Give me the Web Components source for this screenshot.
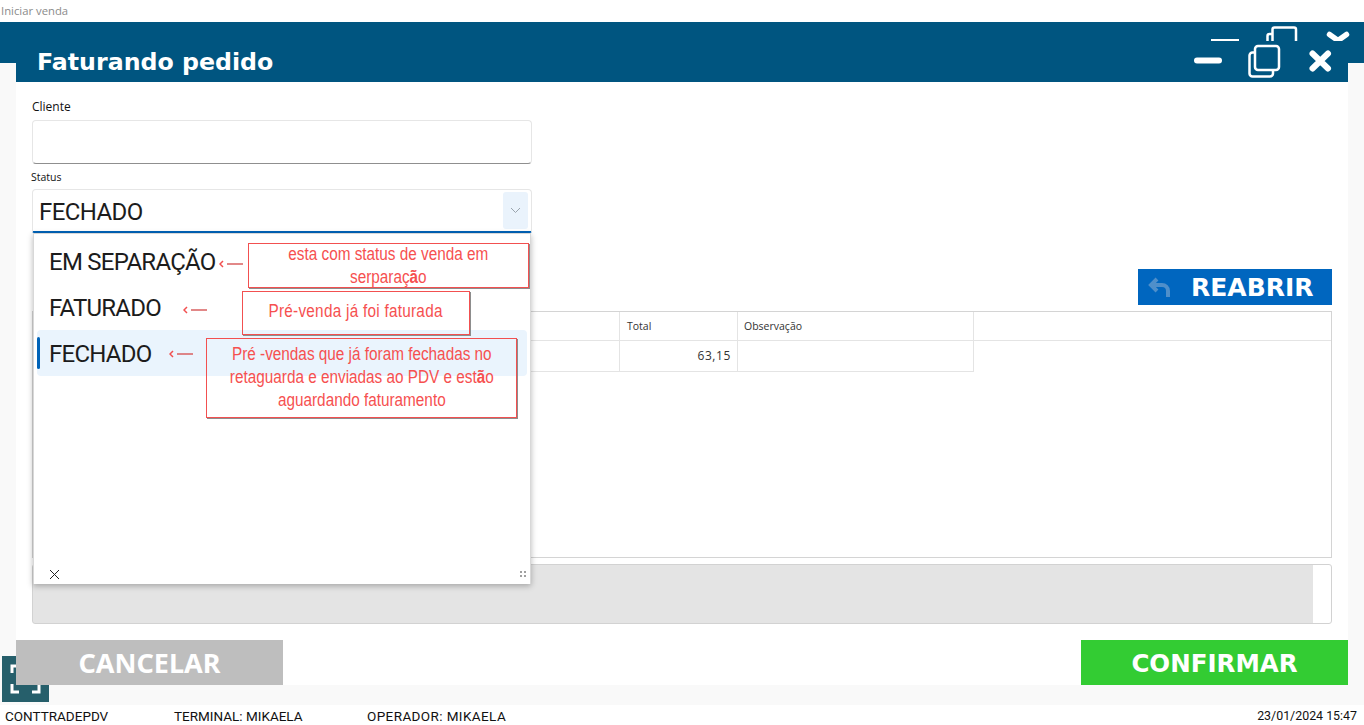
<!DOCTYPE html>
<html lang="pt-BR">
<head>
<meta charset="UTF-8">
<title>Faturando pedido</title>
<style>
html, body { margin: 0; height: 100%; background: #fff; }
body { font-family: "Open Sans", sans-serif; overflow: hidden; }
</style>
</head>
<body>
<pdv-app>
  <win-header slot="header">Faturando pedido</win-header>

  <form-field slot="top" label="Cliente"></form-field>
  <status-select slot="top" label="Status" value="FECHADO">
    <status-option>EM SEPARAÇÃO</status-option>
    <status-option>FATURADO</status-option>
    <status-option selected>FECHADO</status-option>
  </status-select>
  <action-button slot="reopen" kind="reopen">REABRIR</action-button>
  <items-grid slot="bottom"></items-grid>
  <gray-box slot="bottom"></gray-box>
  <action-button slot="cancel" kind="cancel">CANCELAR</action-button>
  <action-button slot="confirm" kind="confirm">CONFIRMAR</action-button>

  <note-box slot="notes" x="248" y="243" w="281" h="45" arrow-x="219" arrow-y="17">esta com status de venda em<br>serparaç<b>ã</b>o</note-box>
  <note-box slot="notes" x="242" y="291" w="228" h="44" arrow-x="183" arrow-y="15" lift="4" spread=".3">Pré-venda já foi faturada</note-box>
  <note-box slot="notes" x="206" y="338" w="311" h="80" arrow-x="169" arrow-y="12" lift="2">Pré -vendas que já foram fechadas no<br>retaguarda e enviadas ao PDV e est<b>ã</b>o<br>aguardando faturamento</note-box>

  <status-bar slot="status" terminal="MIKAELA" operador="MIKAELA" when="23/01/2024 15:47"></status-bar>
</pdv-app>

<script>
    function define(name, css, html, init) {
        customElements.define(name, class extends HTMLElement {
            connectedCallback() {
                if (this.shadowRoot) return
                this.attachShadow({ mode: 'open' }).innerHTML = `<style>${css}</style>${html}`
                if (init) init(this)
            }
        })
    }

    define('pdv-app', `
        :host { display: flex; flex-flow: column; width: 1364px; height: 725px; position: relative; overflow: hidden; background: #fff; }
        .title { height: 22px; flex: none; padding-left: 1px; font: 11.300px/21px "Open Sans", sans-serif; color: #8b8b8b; }
        .stage { flex: none; height: 623px; background: #f9f9f9; padding-bottom: 20px; box-sizing: border-box; }
        .panel { position: relative; z-index: 1; height: 603px; margin: 0 16px; background: #fff; display: flex; flex-flow: column; padding: 0 16px; box-sizing: border-box; }
        .right { display: flex; justify-content: flex-end; margin-top: 36px; }
        .actions { display: flex; justify-content: space-between; margin: auto -16px 0; }
        .corner { position: absolute; left: 2px; top: 656px; width: 47px; height: 46px; background: #265f6b; }
        .corner svg { display: block; }
    `, `
        <div class="title">Iniciar venda</div>
        <slot name="header"></slot>
        <div class="stage">
            <div class="panel">
                <slot name="top"></slot>
                <div class="right"><slot name="reopen"></slot></div>
                <slot name="bottom"></slot>
                <div class="actions"><slot name="cancel"></slot><slot name="confirm"></slot></div>
            </div>
        </div>
        <div class="corner"><svg width="47" height="46" viewBox="0 0 47 46" fill="none" stroke="#fff" stroke-width="3"><path d="M10 17V10h7M30 10h7v7M10 28v8h7M30 36h7v-8"/></svg></div>
        <slot name="status"></slot>
        <slot name="notes"></slot>
    `)

    define('win-header', `
        :host { display: block; flex: none; height: 60px; background: #005580; position: relative; color: #fff; }
        :host::before, :host::after { content: ""; position: absolute; top: 41px; width: 16px; height: 19px; background: #f9f9f9; }
        :host::before { left: 0; }
        :host::after { right: 0; }
        .name { position: absolute; left: 37px; top: 24px; font: bold 23.700px/32px "DejaVu Sans", sans-serif; white-space: nowrap; }
        svg { position: absolute; left: 1190px; top: 0; }
    `, `
        <div class="name"><slot></slot></div>
        <svg width="174" height="60" viewBox="1190 22 174 60" fill="none" stroke="#fff">
            <path d="M1211 40h28" stroke-width="2"/>
            <path d="M1267.500 41v-5a2 2 0 0 1 2-2h3M1272.500 41V29.500a2 2 0 0 1 2-2h19.500a2 2 0 0 1 2 2V41" stroke-width="2.500"/>
            <path d="M1329.500 34.500l8.500 6 8.500-6" stroke-width="5.500" stroke-linecap="round" stroke-linejoin="round" clip-path="url(#cut)"/>
            <clipPath id="cut"><rect x="1320" y="22" width="40" height="19"/></clipPath>
            <path d="M1197 60.500h22" stroke-width="6" stroke-linecap="round"/>
            <rect x="1255" y="46" width="24" height="24" rx="3" stroke-width="2.500"/>
            <path d="M1255 52.500h-2.500a3 3 0 0 0-3 3v18a3 3 0 0 0 3 3h17.500a3 3 0 0 0 3-3v-3.500" stroke-width="2.500"/>
            <path d="M1312.500 53.500l15.500 15M1328 53.500l-15.500 15" stroke-width="6" stroke-linecap="round"/>
        </svg>
    `)

    define('form-field', `
        :host { display: block; padding-top: 16px; }
        label { display: block; font: 12px/18px "Open Sans", sans-serif; color: #111; margin-bottom: 4px; }
        .box { height: 44px; box-sizing: border-box; width: 500px; background: #fff; border: 1px solid #e6e6e6; border-bottom-color: #8f8f8f; border-radius: 4px; }
    `, `<label></label><div class="box"></div>`, (el) => {
        el.shadowRoot.querySelector('label').textContent = el.getAttribute('label')
    })

    define('status-select', `
        :host { display: block; position: relative; z-index: 2; padding-top: 7px; width: 500px; }
        label { display: block; margin-left: -1px; font: 10.500px/13px "Open Sans", sans-serif; color: #111; margin-bottom: 5px; }
        .box { height: 44px; box-sizing: border-box; display: flex; align-items: center; justify-content: space-between; padding: 0 3px 0 6px; border: 1px solid #e6e6e6; border-bottom: 2px solid #0063b8; border-radius: 4px 4px 2px 2px; background: #fff; font: 24px/30px "Roboto", sans-serif; letter-spacing: -.6px; color: #1c1c1c; }
        .value { padding-top: 2px; }
        .chev { width: 25px; height: 37px; background: #eaf3fc; border-radius: 3px; display: grid; place-items: center; }
        .list { position: absolute; left: 1px; top: 69px; width: 498px; height: 351px; box-sizing: border-box; background: #fff; box-shadow: 0 2px 6px rgba(0,0,0,.28); border: 1px solid #d8d8d8; border-bottom: none; padding: 4px 3px 0; display: flex; flex-flow: column; }
        .foot { margin-top: auto; height: 20px; display: flex; justify-content: space-between; align-items: center; padding: 0 1px 0 12px; }
        .foot svg { display: block; }
    `, `
        <label></label>
        <div class="box">
            <span class="value"></span>
            <span class="chev"><svg width="11" height="7" viewBox="0 0 11 7" fill="none" stroke="#9aa4ad"><path d="M1 1l4.500 4.500L10 1"/></svg></span>
        </div>
        <div class="list">
            <slot></slot>
            <div class="foot">
                <svg width="11" height="11" viewBox="0 0 11 11" fill="none" stroke="#222"><path d="M1 1l9 9M10 1l-9 9"/></svg>
                <svg width="6" height="6" viewBox="0 0 6 6" fill="#a0a0a0"><rect width="2" height="2"/><rect x="4" width="2" height="2"/><rect y="4" width="2" height="2"/><rect x="4" y="4" width="2" height="2"/></svg>
            </div>
        </div>
    `, (el) => {
        el.shadowRoot.querySelector('label').textContent = el.getAttribute('label')
        el.shadowRoot.querySelector('.value').textContent = el.getAttribute('value')
    })

    define('status-option', `
        :host { display: flex; align-items: center; box-sizing: border-box; height: 46px; padding: 2px 0 0 12px; font: 24px/30px "Roboto", sans-serif; letter-spacing: -.75px; color: #1c1c1c; border-radius: 4px; position: relative; }
        :host([selected]) { background: #eaf4fd; }
        :host([selected])::before { content: ""; position: absolute; left: 0; top: 7px; width: 3px; height: 32px; border-radius: 2px; background: #0063b8; }
    `, `<slot></slot>`)

    // annotations drawn on top of the form, placed by attribute
    define('note-box', `
        :host { display: block; position: absolute; z-index: 3; }
        .box { position: absolute; inset: 0; box-sizing: border-box; border: 1px solid #f25050; box-shadow: 1px 1px 0 #8d8d8d; display: flex; align-items: center; justify-content: center; text-align: center; font: 17.500px/23px "Liberation Sans", sans-serif; color: #f65050; }
        .text { flex: none; white-space: nowrap; transform: scaleX(.875); }
        svg { position: absolute; }
    `, `<div class="box"><div class="text"><slot></slot></div></div><svg width="24" height="8" viewBox="0 0 24 8" fill="none" stroke="#f25050"><path d="M4 1L1 4l3 3" stroke-width="1.500"/><path d="M8 4h16" stroke="#d86060" stroke-width="1.500"/></svg>`, (el) => {
        const n = (name) => Number(el.getAttribute(name))
        el.style.left = n('x') + 'px'
        el.style.top = n('y') + 'px'
        el.style.width = n('w') + 'px'
        el.style.height = n('h') + 'px'
        const svg = el.shadowRoot.querySelector('svg')
        svg.style.left = (n('arrow-x') - n('x')) + 'px'
        svg.style.top = n('arrow-y') + 'px'
        const box = el.shadowRoot.querySelector('.box')
        box.style.paddingBottom = n('lift') + 'px'
        box.style.letterSpacing = n('spread') + 'px'
    })

    define('items-grid', `
        :host { display: block; box-sizing: border-box; height: 247px; margin-top: 6px; border: 1px solid #d4d4d4; background: #fff; }
        .row { display: grid; grid-template-columns: 587px 118px 236px; font: 10.500px/14px "Open Sans", sans-serif; color: #333; }
        .row > div { box-sizing: border-box; border-right: 1px solid #e4e4e4; border-bottom: 1px solid #e4e4e4; padding: 0 6px; display: flex; align-items: center; }
        .head > div { border-bottom: none; height: 28px; }
        .head > div:nth-child(2) { padding-left: 7px; }
        .line { border-bottom: 1px solid #e4e4e4; height: 28px; }
        .body > div { height: 31px; }
        .num { justify-content: flex-end; font-size: 12px; letter-spacing: .6px; color: #333; }
    `, `
        <div class="line"><div class="row head"><div></div><div>Total</div><div>Observação</div></div></div>
        <div class="row body"><div></div><div class="num">63,15</div><div></div></div>
    `)

    define('gray-box', `
        :host { display: block; box-sizing: border-box; height: 60px; margin-top: 6px; border: 1px solid #d2d2d2; border-radius: 3px; background: linear-gradient(to right, #e4e4e4 1280px, #fff 1280px); }
    `, ``)

    define('action-button', `
        :host { display: flex; align-items: center; justify-content: center; box-sizing: border-box; color: #fff; font-weight: bold; white-space: nowrap; }
        :host([kind=cancel]) { width: 267px; height: 45px; background: #bebebe; font: bold 27px/30px "Noto Sans", sans-serif; }
        :host([kind=confirm]) { width: 267px; height: 45px; padding-top: 2px; background: #33cc33; font: bold 24.500px/30px "DejaVu Sans", sans-serif; }
        :host([kind=reopen]) { width: 194px; height: 36px; padding: 1px 0 0 10px; background: #0066bf; font: bold 25px/30px "DejaVu Sans", sans-serif; justify-content: flex-start; }
        svg { display: none; margin-right: 20px; }
        :host([kind=reopen]) svg { display: block; }
    `, `<svg width="23" height="21" viewBox="0 0 23 21" fill="none" stroke="#4f8fca" stroke-width="4"><path d="M9 2L3 8l6 6"/><path d="M3 8h11a6 6 0 0 1 6 6v6"/></svg><slot></slot>`)

    define('status-bar', `
        :host { display: flex; flex: none; height: 20px; align-items: center; padding: 2px 7px 0 5px; box-sizing: border-box; font: 13.500px/18px "Roboto", sans-serif; color: #111; white-space: nowrap; }
        .name { width: 169px; }
        .term { width: 193px; }
        .op { letter-spacing: .4px; }
        .when { margin-left: auto; font-size: 12.400px; }
    `, `<span class="name">CONTTRADEPDV</span><span class="term"></span><span class="op"></span><span class="when"></span>`, (el) => {
        const root = el.shadowRoot
        root.querySelector('.term').textContent = 'TERMINAL: ' + el.getAttribute('terminal')
        root.querySelector('.op').textContent = 'OPERADOR: ' + el.getAttribute('operador')
        root.querySelector('.when').textContent = el.getAttribute('when')
    })
</script>
</body>
</html>
